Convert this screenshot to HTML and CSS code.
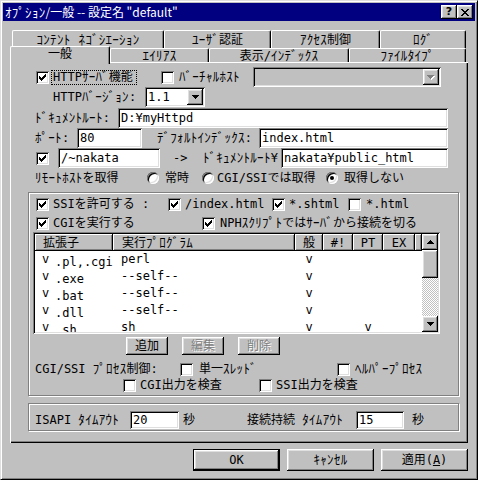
FILE: index.html
```html
<!DOCTYPE html>
<html lang="ja">
<head>
<meta charset="utf-8">
<title>ｵﾌﾟｼｮﾝ/一般</title>
<link rel="stylesheet" href="styles.css">
</head>
<body>
<div class="win">
  <div class="title">
    <span class="title-text"><span class="hk">ｵﾌﾟｼｮﾝ</span>/一般 -- 設定名 "default"</span>
    <span class="tbtn">?</span>
    <span class="tbtn"><svg width="8" height="7" viewBox="0 0 8 7"><path d="M0 0h2v1H0zM6 0h2v1H6zM1 1h2v1H1zM5 1h2v1H5zM2 2h4v1H2zM3 3h2v1H3zM2 4h4v1H2zM1 5h2v1H1zM5 5h2v1H5zM0 6h2v1H0zM6 6h2v1H6z"/></svg></span>
  </div>

  <div class="tabrow tr1">
    <div class="tab w152"><span class="hk">ｺﾝﾃﾝﾄ ﾈｺﾞｼｴｰｼｮﾝ</span></div>
    <div class="tab w107"><span class="hk">ﾕｰｻﾞ</span>認証</div>
    <div class="tab w109"><span class="hk">ｱｸｾｽ</span>制御</div>
    <div class="tab w86"><span class="hk">ﾛｸﾞ</span></div>
  </div>
  <div class="tabrow tr2">
    <div class="tab sel w100">一般</div>
    <div class="tab w99"><span class="hk">ｴｲﾘｱｽ</span></div>
    <div class="tab w140">表示/<span class="hk">ｲﾝﾃﾞｯｸｽ</span></div>
    <div class="tab w117"><span class="hk">ﾌｧｲﾙﾀｲﾌﾟ</span></div>
  </div>

  <div class="panel">
    <div class="row h20 mt5">
      <span class="cb ml26"><svg class="chk" width="7" height="7" viewBox="0 0 7 7"><path d="M6 0h1v1H6zM5 1h2v1H5zM0 2h1v1H0zM4 2h3v1H4zM0 3h2v1H0zM3 3h3v1H3zM0 4h5v1H0zM1 5h3v1H1zM2 6h1v1H2z"/></svg></span>
      <span class="lbl focus ml2 w86">HTTP<span class="hk">ｻｰﾊﾞ</span>機能</span>
      <span class="cb ml24"></span>
      <span class="lbl ml5 w74"><span class="hk">ﾊﾞｰﾁｬﾙﾎｽﾄ</span></span>
      <span class="combo dis w188"><span class="val"></span><span class="cbtn"><svg width="8" height="5" viewBox="0 0 8 5"><path fill="#fff" d="M1 1h7v1H1zM2 2h5v1H2zM3 3h3v1H3zM4 4h1v1H4z"/><path fill="#808080" d="M0 0h7v1H0zM1 1h5v1H1zM2 2h3v1H2zM3 3h1v1H3z"/></svg></span></span>
    </div>
    <div class="row h20">
      <span class="lbl ml43 w92">HTTP<span class="hk">ﾊﾞｰｼﾞｮﾝ</span>:</span>
      <span class="combo w60"><span class="val">1.1</span><span class="cbtn"><svg width="7" height="4" viewBox="0 0 7 4"><path d="M0 0h7v1H0zM1 1h5v1H1zM2 2h3v1H2zM3 3h1v1H3z"/></svg></span></span>
    </div>
    <div class="row h20 mt1">
      <span class="lbl ml25 w83"><span class="hk">ﾄﾞｷｭﾒﾝﾄﾙｰﾄ</span>:</span>
      <span class="edit w330">D:¥myHttpd</span>
    </div>
    <div class="row h20">
      <span class="lbl ml25 w42"><span class="hk">ﾎﾟｰﾄ</span>:</span>
      <span class="edit w65">80</span>
      <span class="lbl ml15 w102"><span class="hk">ﾃﾞﾌｫﾙﾄｲﾝﾃﾞｯｸｽ</span>:</span>
      <span class="edit w189">index.html</span>
    </div>
    <div class="row h20">
      <span class="cb ml26"><svg class="chk" width="7" height="7" viewBox="0 0 7 7"><path d="M6 0h1v1H6zM5 1h2v1H5zM0 2h1v1H0zM4 2h3v1H4zM0 3h2v1H0zM3 3h3v1H3zM0 4h5v1H0zM1 5h3v1H1zM2 6h1v1H2z"/></svg></span>
      <span class="edit ml9 w102">/~nakata</span>
      <span class="lbl ml13 w30">-&gt;</span>
      <span class="lbl w78"><span class="hk">ﾄﾞｷｭﾒﾝﾄﾙｰﾄ</span>¥</span>
      <span class="edit w167">nakata¥public_html</span>
    </div>
    <div class="row h15 mt2">
      <span class="lbl ml25 w111"><span class="hk">ﾘﾓｰﾄﾎｽﾄ</span>を取得</span>
      <span class="rb ml1"></span>
      <span class="lbl ml6 w37">常時</span>
      <span class="rb"></span>
      <span class="lbl ml3 w109">CGI/SSIでは取得</span>
      <span class="rb on"></span>
      <span class="lbl ml6">取得しない</span>
    </div>

    <div class="grp gh1 mt7 ml18">
      <div class="row h14 mt4">
        <span class="cb ml7"><svg class="chk" width="7" height="7" viewBox="0 0 7 7"><path d="M6 0h1v1H6zM5 1h2v1H5zM0 2h1v1H0zM4 2h3v1H4zM0 3h2v1H0zM3 3h3v1H3zM0 4h5v1H0zM1 5h3v1H1zM2 6h1v1H2z"/></svg></span>
        <span class="lbl ml4 w115">SSIを許可する :</span>
        <span class="cb"><svg class="chk" width="7" height="7" viewBox="0 0 7 7"><path d="M6 0h1v1H6zM5 1h2v1H5zM0 2h1v1H0zM4 2h3v1H4zM0 3h2v1H0zM3 3h3v1H3zM0 4h5v1H0zM1 5h3v1H1zM2 6h1v1H2z"/></svg></span>
        <span class="lbl ml4 w87">/index.html</span>
        <span class="cb"><svg class="chk" width="7" height="7" viewBox="0 0 7 7"><path d="M6 0h1v1H6zM5 1h2v1H5zM0 2h1v1H0zM4 2h3v1H4zM0 3h2v1H0zM3 3h3v1H3zM0 4h5v1H0zM1 5h3v1H1zM2 6h1v1H2z"/></svg></span>
        <span class="lbl ml4 w59">*.shtml</span>
        <span class="cb"></span>
        <span class="lbl ml5">*.html</span>
      </div>
      <div class="row h14 mt5">
        <span class="cb ml7"><svg class="chk" width="7" height="7" viewBox="0 0 7 7"><path d="M6 0h1v1H6zM5 1h2v1H5zM0 2h1v1H0zM4 2h3v1H4zM0 3h2v1H0zM3 3h3v1H3zM0 4h5v1H0zM1 5h3v1H1zM2 6h1v1H2z"/></svg></span>
        <span class="lbl ml4 w149">CGIを実行する</span>
        <span class="cb"><svg class="chk" width="7" height="7" viewBox="0 0 7 7"><path d="M6 0h1v1H6zM5 1h2v1H5zM0 2h1v1H0zM4 2h3v1H4zM0 3h2v1H0zM3 3h3v1H3zM0 4h5v1H0zM1 5h3v1H1zM2 6h1v1H2z"/></svg></span>
        <span class="lbl ml5">NPH<span class="hk">ｽｸﾘﾌﾟﾄ</span>では<span class="hk">ｻｰﾊﾞ</span>から接続を切る</span>
      </div>

      <div class="list mt2 ml4">
        <div class="lv">
          <div class="lhead">
            <div class="hc c1">拡張子</div>
            <div class="hc c2">実行<span class="hk">ﾌﾟﾛｸﾞﾗﾑ</span></div>
            <div class="hc c3 ctr">般</div>
            <div class="hc c4 ctr">#!</div>
            <div class="hc c5 ctr">PT</div>
            <div class="hc c6 ctr">EX</div>
            <div class="hc c7"></div>
          </div>
          <div class="lrow"><div class="c1"><span class="mark">v</span>.pl,.cgi</div><div class="c2">perl</div><div class="c3 ctr">v</div><div class="c4"></div><div class="c5"></div><div class="c6"></div></div>
          <div class="lrow"><div class="c1"><span class="mark">v</span>.exe</div><div class="c2">--self--</div><div class="c3 ctr">v</div><div class="c4"></div><div class="c5"></div><div class="c6"></div></div>
          <div class="lrow"><div class="c1"><span class="mark">v</span>.bat</div><div class="c2">--self--</div><div class="c3 ctr">v</div><div class="c4"></div><div class="c5"></div><div class="c6"></div></div>
          <div class="lrow"><div class="c1"><span class="mark">v</span>.dll</div><div class="c2">--self--</div><div class="c3 ctr">v</div><div class="c4"></div><div class="c5"></div><div class="c6"></div></div>
          <div class="lrow"><div class="c1"><span class="mark">v</span>.sh</div><div class="c2">sh</div><div class="c3 ctr">v</div><div class="c4"></div><div class="c5 ctr">v</div><div class="c6"></div></div>
        </div>
        <div class="vs">
          <div class="sbtn"><svg width="7" height="4" viewBox="0 0 7 4"><path d="M3 0h1v1H3zM2 1h3v1H2zM1 2h5v1H1zM0 3h7v1H0z"/></svg></div>
          <div class="thumb"></div>
          <div class="track"></div>
          <div class="sbtn"><svg width="7" height="4" viewBox="0 0 7 4"><path d="M0 0h7v1H0zM1 1h5v1H1zM2 2h3v1H2zM3 3h1v1H3z"/></svg></div>
        </div>
      </div>

      <div class="row h18 mt3">
        <span class="sbt ml97">追加</span>
        <span class="sbt ml14 dis-t">編集</span>
        <span class="sbt ml14 dis-t">削除</span>
      </div>
      <div class="row h14 mt7">
        <span class="lbl ml6 w145">CGI/SSI <span class="hk">ﾌﾟﾛｾｽ</span>制御:</span>
        <span class="cb"></span>
        <span class="lbl ml6 w138">単一<span class="hk">ｽﾚｯﾄﾞ</span></span>
        <span class="cb"></span>
        <span class="lbl ml5"><span class="hk">ﾍﾙﾊﾟｰﾌﾟﾛｾｽ</span></span>
      </div>
      <div class="row h14 mt2">
        <span class="cb ml94"></span>
        <span class="lbl ml4 w119">CGI出力を検査</span>
        <span class="cb"></span>
        <span class="lbl ml4">SSI出力を検査</span>
      </div>
    </div>

    <div class="grp gh2 mt7 ml18">
      <div class="row h18 mt7">
        <span class="lbl ml6 w95">ISAPI <span class="hk">ﾀｲﾑｱｳﾄ</span></span>
        <span class="edit sm w49">20</span>
        <span class="lbl ml4 w64">秒</span>
        <span class="lbl w109">接続持続 <span class="hk">ﾀｲﾑｱｳﾄ</span></span>
        <span class="edit sm w48">15</span>
        <span class="lbl ml8">秒</span>
      </div>
    </div>
  </div>

  <div class="btnbar">
    <div class="btn def">OK</div>
    <div class="btn"><span class="hk">ｷｬﾝｾﾙ</span></div>
    <div class="btn">適用(<u>A</u>)</div>
  </div>
</div>
</body>
</html>
```

FILE: styles.css
```css
:root {
  --raised: inset -1px -1px #000, inset 1px 1px #fff, inset -2px -2px #808080, inset 2px 2px #dfdfdf;
  --sunken: inset 1px 1px #808080, inset -1px -1px #fff, inset 2px 2px #000, inset -2px -2px #dfdfdf;
}
* { box-sizing: border-box; margin: 0; padding: 0; }
html, body { width: 478px; height: 480px; overflow: hidden; }
body {
  background: #c0c0c0;
  color: #000;
  font-family: "DejaVu Sans Mono", "Noto Sans CJK JP", monospace;
  font-size: 12px;
  line-height: 14px;
}
.hk { font-size: 13px; letter-spacing: 0.3px; }

.win {
  width: 478px;
  height: 480px;
  padding: 2px;
  border: 1px solid;
  border-color: #dfdfdf #000 #000 #dfdfdf;
  box-shadow: inset 1px 1px #fff, inset -1px -1px #808080;
  display: flex;
  flex-direction: column;
  align-items: flex-start;
}

/* title bar */
.title {
  flex: none;
  width: 100%;
  height: 18px;
  background: #000080;
  color: #fff;
  display: flex;
  align-items: center;
  padding: 0 2px;
}
.title-text { flex: 1; white-space: nowrap; font-family: "Noto Sans CJK JP", sans-serif; }
.tbtn {
  flex: none;
  width: 16px;
  height: 14px;
  background: #c0c0c0;
  color: #000;
  box-shadow: var(--raised);
  display: flex;
  align-items: center;
  justify-content: center;
  font-family: "DejaVu Sans", sans-serif;
  font-weight: bold;
  font-size: 11px;
}
.tbtn svg { display: block; }

/* tabs */
.tabrow { flex: none; display: flex; }
.tr1 { margin-top: 9px; height: 18px; padding-left: 9px; }
.tr2 { height: 14px; padding-left: 7px; }
.tab {
  flex: none;
  display: flex;
  align-items: center;
  justify-content: center;
  white-space: nowrap;
  border-left: 1px solid #fff;
  border-top: 1px solid #fff;
  border-right: 1px solid #000;
  box-shadow: inset -1px 0 #808080;
  border-radius: 2px 2px 0 0;
}
.tr2 .tab { padding-top: 1px; }
.tab.sel {
  position: relative;
  z-index: 2;
  align-self: flex-start;
  height: 18px;
  margin-top: -2px;
  padding: 0 0 3px;
  background: #c0c0c0;
}

/* panel */
.panel {
  flex: none;
  margin-left: 7px;
  width: 458px;
  height: 381px;
  box-shadow: inset 1px 1px #fff, inset -1px -1px #000, inset -2px -2px #808080;
  display: flex;
  flex-direction: column;
  align-items: flex-start;
}
.row { flex: none; display: flex; align-items: center; }
.row > * { flex: none; }
.lbl { white-space: nowrap; }
.focus {
  height: 15px;
  border: 1px dotted #000;
  padding-left: 1px;
  display: flex;
  align-items: center;
}

.cb {
  width: 13px;
  height: 13px;
  background: #fff;
  box-shadow: var(--sunken);
  display: flex;
  align-items: center;
  justify-content: center;
}
.cb svg { display: block; }
.rb {
  width: 12px;
  height: 12px;
  border-radius: 50%;
  background: #fff;
  box-shadow: inset 1px 1px #808080, inset -1px -1px #fff, inset 2px 2px #000, inset -2px -2px #dfdfdf;
  display: flex;
  align-items: center;
  justify-content: center;
}
.rb.on::after {
  content: "";
  width: 4px;
  height: 4px;
  border-radius: 50%;
  background: #000;
}
.edit {
  height: 20px;
  background: #fff;
  box-shadow: var(--sunken);
  padding: 0 3px;
  display: flex;
  align-items: center;
  white-space: nowrap;
  overflow: hidden;
}
.edit.sm { height: 18px; }
.combo {
  height: 20px;
  background: #fff;
  box-shadow: var(--sunken);
  padding: 2px;
  display: flex;
  align-items: center;
}
.combo.dis { background: #c0c0c0; }
.combo .val { flex: 1; padding-left: 1px; }
.cbtn {
  flex: none;
  width: 16px;
  height: 16px;
  background: #c0c0c0;
  box-shadow: var(--raised);
  display: flex;
  align-items: center;
  justify-content: center;
}
.cbtn svg, .sbtn svg { display: block; }

/* group boxes */
.grp {
  flex: none;
  width: 431px;
  border: 1px solid #808080;
  box-shadow: inset 1px 1px #fff, 1px 1px #fff;
  display: flex;
  flex-direction: column;
  align-items: flex-start;
}
.gh1 { height: 204px; }
.gh2 { height: 28px; }

/* list view */
.list {
  flex: none;
  width: 407px;
  height: 102px;
  padding: 2px;
  background: #fff;
  box-shadow: var(--sunken);
  display: flex;
}
.lv { width: 387px; height: 98px; overflow: hidden; background: #fff; }
.lhead { display: flex; height: 17px; }
.hc {
  flex: none;
  height: 17px;
  background: #c0c0c0;
  box-shadow: inset -1px -1px #000, inset 1px 1px #fff, inset -2px -2px #808080;
  display: flex;
  align-items: center;
  white-space: nowrap;
}
.hc.c1 { padding-left: 8px; }
.hc.c2 { padding-left: 9px; }
.ctr { justify-content: center; text-align: center; }
.lrow { display: flex; height: 17px; }
.lrow > div { flex: none; line-height: 17px; white-space: nowrap; }
.lrow .c1 { padding-left: 7px; }
.lrow .c2 { padding-left: 8px; }
.mark { display: inline-block; width: 13px; vertical-align: 3px; }
.c1 { width: 78px; }
.c2 { width: 182px; }
.c3 { width: 28px; }
.c4 { width: 30px; }
.c5 { width: 30px; }
.c6 { width: 32px; }
.c7 { width: 7px; }

.vs { flex: none; width: 16px; height: 98px; display: flex; flex-direction: column; }
.sbtn {
  flex: none;
  width: 16px;
  height: 16px;
  background: #c0c0c0;
  box-shadow: var(--raised);
  display: flex;
  align-items: center;
  justify-content: center;
}
.thumb { flex: none; height: 28px; background: #c0c0c0; box-shadow: var(--raised); }
.track { flex: 1; background: repeating-conic-gradient(#fff 0 25%, #c0c0c0 0 50%) 0 0 / 2px 2px; }

/* small push buttons */
.sbt {
  width: 42px;
  height: 18px;
  background: #c0c0c0;
  box-shadow: var(--raised);
  display: flex;
  align-items: center;
  justify-content: center;
}
.dis-t { color: #808080; text-shadow: 1px 1px #fff; }

/* dialog buttons */
.btnbar {
  flex: none;
  width: 100%;
  margin-top: 6px;
  padding-right: 7px;
  display: flex;
  justify-content: flex-end;
  gap: 7px;
}
.btn {
  width: 87px;
  height: 22px;
  background: #c0c0c0;
  box-shadow: var(--raised);
  display: flex;
  align-items: center;
  justify-content: center;
  white-space: nowrap;
}
.btn.def { border: 1px solid #000; }

/* sizes and offsets */
.h14 { height: 14px; }
.h15 { height: 15px; }
.h18 { height: 18px; }
.h20 { height: 20px; }
.mt1 { margin-top: 1px; }
.mt2 { margin-top: 2px; }
.mt3 { margin-top: 3px; }
.mt4 { margin-top: 4px; }
.mt5 { margin-top: 5px; }
.mt7 { margin-top: 7px; }
.ml1 { margin-left: 1px; }
.ml2 { margin-left: 2px; }
.ml3 { margin-left: 3px; }
.ml4 { margin-left: 4px; }
.ml5 { margin-left: 5px; }
.ml6 { margin-left: 6px; }
.ml7 { margin-left: 7px; }
.ml8 { margin-left: 8px; }
.ml9 { margin-left: 9px; }
.ml13 { margin-left: 13px; }
.ml14 { margin-left: 14px; }
.ml15 { margin-left: 15px; }
.ml18 { margin-left: 18px; }
.ml24 { margin-left: 24px; }
.ml25 { margin-left: 25px; }
.ml26 { margin-left: 26px; }
.ml43 { margin-left: 43px; }
.ml94 { margin-left: 94px; }
.ml97 { margin-left: 97px; }
.w30 { width: 30px; }
.w37 { width: 37px; }
.w42 { width: 42px; }
.w48 { width: 48px; }
.w49 { width: 49px; }
.w59 { width: 59px; }
.w60 { width: 60px; }
.w64 { width: 64px; }
.w65 { width: 65px; }
.w74 { width: 74px; }
.w78 { width: 78px; }
.w83 { width: 83px; }
.w86 { width: 86px; }
.w87 { width: 87px; }
.w92 { width: 92px; }
.w95 { width: 95px; }
.w99 { width: 99px; }
.w100 { width: 100px; }
.w102 { width: 102px; }
.w107 { width: 107px; }
.w109 { width: 109px; }
.w111 { width: 111px; }
.w115 { width: 115px; }
.w117 { width: 117px; }
.w119 { width: 119px; }
.w138 { width: 138px; }
.w140 { width: 140px; }
.w145 { width: 145px; }
.w149 { width: 149px; }
.w152 { width: 152px; }
.w167 { width: 167px; }
.w188 { width: 188px; }
.w189 { width: 189px; }
.w330 { width: 330px; }
```
